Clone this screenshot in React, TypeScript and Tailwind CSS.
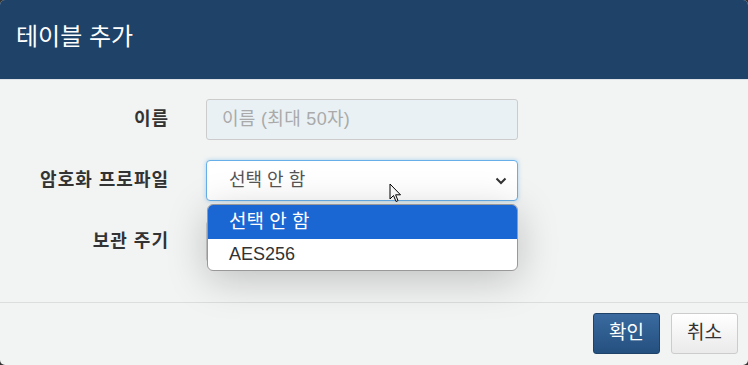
import React from 'react';

const font = { fontFamily: '"Liberation Sans", "Noto Sans CJK KR", sans-serif' };

function Cursor() {
  return (
    <svg width="14" height="22" viewBox="0 0 14 22" className="absolute left-[389px] top-[183px]">
      <path d="M1 1 L1 16 L4.5 12.5 L7 18.5 L9 17.6 L6.6 11.8 L11.5 11.8 Z" fill="#fff" stroke="#000" strokeWidth="1" strokeLinejoin="round" />
    </svg>
  );
}

export default function App() {
  return (
    <div className="w-[748px] h-[365px] bg-[#333] overflow-hidden" style={font}>
      <div className="relative w-full h-full bg-[#f2f4f3] rounded-[5px] overflow-hidden flex flex-col">
        {/* header */}
        <div className="h-[80px] bg-[#1e4268] border-b border-[#dde3e6] flex items-center px-4 shrink-0">
          <h1 className="text-[24px] text-white font-normal pb-[6px]">테이블 추가</h1>
        </div>

        {/* body */}
        <div className="flex-1 flex flex-col gap-5 pt-[19px]">
          <div className="flex items-center h-[41px]">
            <label className="w-[169px] text-right text-[18px] font-bold text-[#333] tracking-[1px]">이름</label>
            <input disabled placeholder="이름 (최대 50자)"
              className="ml-[37px] w-[312px] h-[41px] px-[15px] bg-[#e9f1f4] border border-[#ccc] rounded-[3px] text-[18px] tracking-[0.3px] placeholder-[#aaa]" />
          </div>
          <div className="flex items-center h-[41px] relative">
            <label className="w-[169px] text-right text-[18px] font-bold text-[#333] tracking-[1px]">암호화 프로파일</label>
            <div className="ml-[37px] w-[312px] h-[41px] px-[22px] bg-white border border-[#66afe9] rounded-[4px] shadow-[0_0_4px_rgba(102,175,233,0.5)] flex items-center justify-between text-[18px] text-[#555]">
              <span>선택 안 함</span>
              <svg width="12" height="8" viewBox="0 0 12 8" className="-mr-[12px]">
                <path d="M1.5 1.5 L6 6 L10.5 1.5" fill="none" stroke="#333" strokeWidth="2" />
              </svg>
            </div>
            {/* open dropdown */}
            <div className="absolute left-[207px] top-[44px] w-[311px] bg-white rounded-[6px] border border-[#999] overflow-hidden shadow-[0_8px_40px_rgba(0,0,0,0.22)] z-10">
              <div className="h-[34px] bg-[#1a66d2] text-white text-[19px] px-[21px] flex items-center">선택 안 함</div>
              <div className="h-[31px] text-[#333] text-[18px] px-[21px] flex items-center">AES256</div>
            </div>
          </div>
          <div className="flex items-center h-[41px]">
            <label className="w-[169px] text-right text-[18px] font-bold text-[#333] tracking-[1px]">보관 주기</label>
            <div className="ml-[37px] w-[312px] h-[41px] bg-white border border-[#ccc] rounded-[3px]" />
          </div>
        </div>

        {/* footer */}
        <div className="h-[63px] border-t border-[#ddd] flex items-start justify-end gap-[11px] pt-[10px] pr-[10px] shrink-0">
          <button className="w-[67px] h-[41px] rounded-[3px] border border-[#1e4268] bg-gradient-to-b from-[#3a6aa0] to-[#24507f] text-white text-[19px]">확인</button>
          <button className="w-[67px] h-[41px] rounded-[3px] border border-[#ccc] bg-gradient-to-b from-[#fff] to-[#eaeaea] text-[#333] text-[19px]">취소</button>
        </div>

        <Cursor />
      </div>
    </div>
  );
}
